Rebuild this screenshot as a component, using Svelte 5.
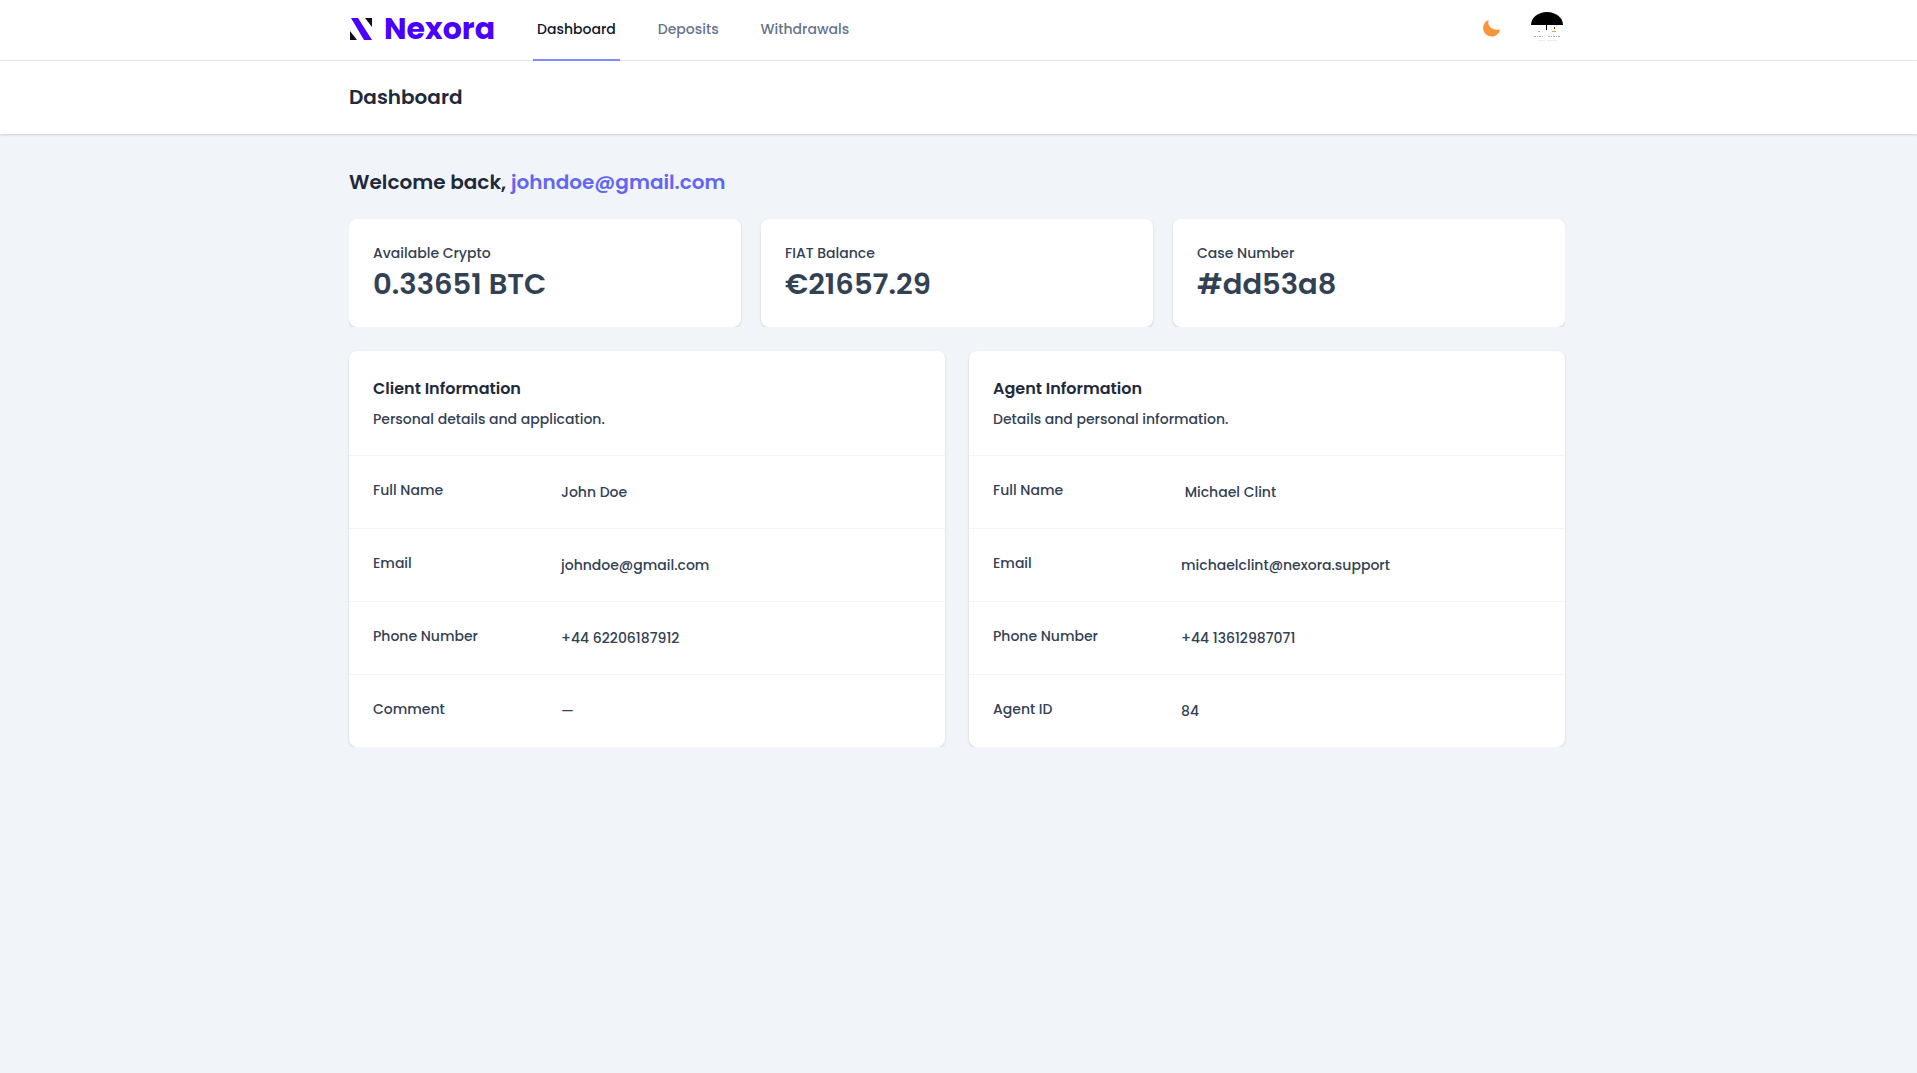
<script>
    const links = ["Dashboard", "Deposits", "Withdrawals"];
    let active = $state("Dashboard");

    const user = "johndoe@gmail.com";

    const stats = [
        { label: "Available Crypto", value: "0.33651 BTC" },
        { label: "FIAT Balance", value: "€21657.29" },
        { label: "Case Number", value: "#dd53a8" }
    ];

    const panels = [
        {
            title: "Client Information",
            text: "Personal details and application.",
            rows: [
                ["Full Name", "John Doe"],
                ["Email", "johndoe@gmail.com"],
                ["Phone Number", "+44 62206187912"],
                ["Comment", "—"]
            ]
        },
        {
            title: "Agent Information",
            text: "Details and personal information.",
            rows: [
                ["Full Name", "\u00a0Michael Clint"],
                ["Email", "michaelclint@nexora.support"],
                ["Phone Number", "+44 13612987071"],
                ["Agent ID", "84"]
            ]
        }
    ];
</script>

<nav>
    <div class="container bar">
        <a class="logo" href="#home">
            <svg width="24" height="24" viewBox="0 0 24 24" aria-hidden="true">
                <path d="M2 1H9L23 23H15Z" fill="#4a00ff" />
                <path d="M16 1H23V10Z" fill="#110b22" />
                <path d="M1 14V23H8Z" fill="#110b22" />
            </svg>
            <span>Nexora</span>
        </a>
        <div class="links">
            {#each links as link}
                <a href="#{link.toLowerCase()}" class:active={active === link} onclick={() => (active = link)}>{link}</a>
            {/each}
        </div>
        <div class="actions">
            <button class="icon" aria-label="Toggle theme">
                <svg width="22" height="22" viewBox="0 0 22 22" fill="#fb923c">
                    <path d="M7.6 3A8.5 8.5 0 1 0 19 12.4C11.5 13.6 6 10 7.6 3Z" />
                </svg>
            </button>
            <button class="icon" aria-label="Account menu">
                <svg width="32" height="32" viewBox="0 0 32 32">
                    <path d="M0 13A16 13 0 0 1 32 13Z" />
                    <path d="M15 13H16V18H15Z" />
                    <path d="M23 15H24V17H23Z" fill="#444" />
                    <path d="M7 19H9V20H7ZM21 19H25V20H21Z" fill="#e0a040" />
                    <path d="M8 16H9M6 18H7M25 14H26M20 18H21" stroke="#ddd" />
                    <path d="M3 24.5H13M17 24.5H30" stroke="#aaa" stroke-dasharray="2 1 1 1" />
                    <path d="M6 28.5H14M16 28.5H26" stroke="#eee" />
                </svg>
            </button>
        </div>
    </div>
</nav>

<header>
    <div class="container">
        <h1>Dashboard</h1>
    </div>
</header>

<main class="container">
    <h2>Welcome back, <span>{user}</span></h2>

    <div class="stats">
        {#each stats as stat}
            <div class="card stat">
                <p>{stat.label}</p>
                <strong>{stat.value}</strong>
            </div>
        {/each}
    </div>

    <div class="panels">
        {#each panels as panel}
            <section class="card">
                <div class="heading">
                    <h3>{panel.title}</h3>
                    <p>{panel.text}</p>
                </div>
                <dl>
                    {#each panel.rows as [label, value]}
                        <div class="row">
                            <dt>{label}</dt>
                            <dd>{value}</dd>
                        </div>
                    {/each}
                </dl>
            </section>
        {/each}
    </div>
</main>

<style>
    :global(body) {
        background: #f1f5f9;
        color: #334155;
        font-family: Poppins, Inter, sans-serif;
        font-size: 14px;
        font-weight: 500;
        line-height: 20px;
    }

    h1, h2, h3, p, dl, dd {
        margin: 0;
    }

    .container {
        box-sizing: border-box;
        max-width: 1283px;
        margin: 0 auto;
        padding: 0 35px 0 32px;
    }

    nav {
        background: white;
        border-bottom: 1px solid #e8ebf0;
    }

    .bar {
        display: flex;
        height: 60px;
    }

    a {
        text-decoration: none;
    }

    .logo {
        display: flex;
        align-items: center;
        gap: 11px;
        padding: 0 38px 3px 0;
        color: #4a00ff;
        font-size: 30px;
        font-weight: 700;
    }

    .links {
        display: flex;
        gap: 34px;
        margin-bottom: -1px;
    }

    .links a {
        display: flex;
        align-items: center;
        padding: 0 4px 2px;
        border-bottom: 2px solid transparent;
        color: #64748b;
    }

    .links a.active {
        border-color: #818cf8;
        color: #0f172a;
    }

    .actions {
        display: flex;
        align-items: center;
        gap: 28px;
        margin-left: auto;
        padding: 0 2px 4px 0;
    }

    .icon {
        display: flex;
        padding: 0;
        border: 0;
        background: none;
        cursor: pointer;
    }

    header {
        padding: 22px 0 23px;
        background: white;
        box-shadow: 0 1px 3px rgba(0, 0, 0, 0.1), 0 1px 2px rgba(0, 0, 0, 0.06);
    }

    h1, h2 {
        color: #1e293b;
        font-size: 20px;
        font-weight: 600;
        line-height: 28px;
    }

    h2 {
        margin: 34px 0 23px;
    }

    h2 span {
        color: #6366f1;
    }

    /* clips the outer edges of the card shadows */
    .stats {
        display: grid;
        grid-template-columns: repeat(3, 1fr);
        gap: 20px;
        margin-bottom: 24px;
        overflow: hidden;
    }

    .card {
        background: white;
        border-radius: 8px;
        box-shadow: 0 1px 3px rgba(0, 0, 0, 0.1), 0 1px 2px rgba(0, 0, 0, 0.06);
    }

    .stat {
        padding: 24px 24px 26px;
    }

    .stat strong {
        display: block;
        margin-top: 4px;
        font-size: 29px;
        font-weight: 600;
        line-height: 34px;
    }

    .panels {
        display: grid;
        grid-template-columns: 1fr 1fr;
        gap: 24px;
    }

    .heading {
        padding: 24px 24px 26px;
    }

    h3 {
        margin-bottom: 6px;
        color: #1e293b;
        font-size: 16px;
        font-weight: 600;
        line-height: 28px;
    }

    .row {
        display: grid;
        grid-template-columns: repeat(3, 1fr);
        gap: 16px;
        padding: 24px;
        border-top: 1px solid #f1f5f9;
    }

    dd {
        grid-column: span 2;
        padding: 2px 0;
    }
</style>
